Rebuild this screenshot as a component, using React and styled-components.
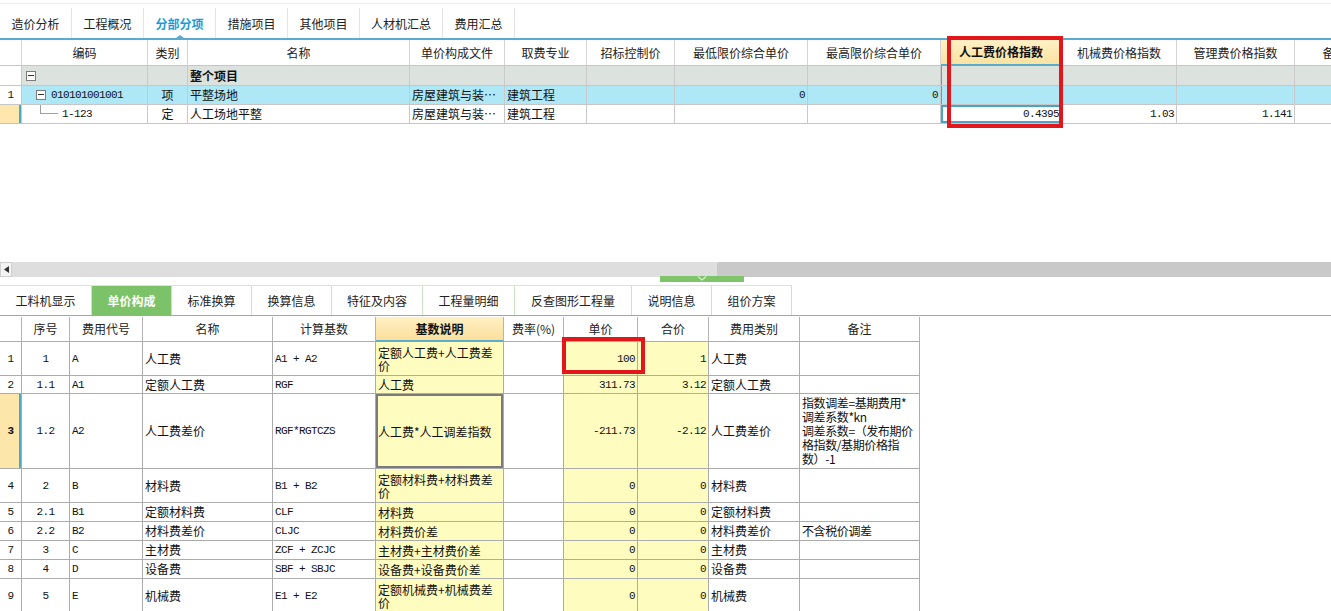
import React from 'react'
import styled, { createGlobalStyle, css } from 'styled-components'

const GlobalStyle = createGlobalStyle`
  html, body { margin: 0; padding: 0; background: #fff; }
  body {
    font-family: "Noto Sans CJK SC", "Noto Sans", sans-serif;
    font-size: 12px;
    color: #111;
    overflow: hidden;
  }
`

const topTabs = ['造价分析', '工程概况', '分部分项', '措施项目', '其他项目', '人材机汇总', '费用汇总']
const topTabWidths = [72, 72, 72, 72, 72, 83, 72]

const bottomTabs = ['工料机显示', '单价构成', '标准换算', '换算信息', '特征及内容', '工程量明细', '反查图形工程量', '说明信息', '组价方案']
const bottomTabWidths = [92, 80, 80, 80, 91, 92, 117, 80, 80]

const topCols = '22px 126px 40px 222px 95px 82px 88px 133px 133px 121px 115px 118px 80px'
const topHead = ['', '编码', '类别', '名称', '单价构成文件', '取费专业', '招标控制价', '最低限价综合单价', '最高限价综合单价', '人工费价格指数', '机械费价格指数', '管理费价格指数', '备注']

const botCols = '22px 48px 73px 130px 103px 128px 60px 74px 71px 91px 120px'
const botHead = ['', '序号', '费用代号', '名称', '计算基数', '基数说明', '费率(%)', '单价', '合价', '费用类别', '备注']

const botRows = [
  { h: 34, no: '1', seq: '1', code: 'A', name: '人工费', base: 'A1 + A2', desc: '定额人工费+人工费差价', price: '100', total: '1', type: '人工费' },
  { h: 18, no: '2', seq: '1.1', code: 'A1', name: '定额人工费', base: 'RGF', desc: '人工费', price: '311.73', total: '3.12', type: '定额人工费' },
  {
    h: 75, no: '3', seq: '1.2', code: 'A2', name: '人工费差价', base: 'RGF*RGTCZS', desc: '人工费*人工调差指数', price: '-211.73', total: '-2.12', type: '人工费差价', current: true,
    note: ['指数调差=基期费用*', '调差系数*kn', '调差系数=（发布期价', '格指数/基期价格指', '数）-1'],
  },
  { h: 34, no: '4', seq: '2', code: 'B', name: '材料费', base: 'B1 + B2', desc: '定额材料费+材料费差价', price: '0', total: '0', type: '材料费' },
  { h: 19, no: '5', seq: '2.1', code: 'B1', name: '定额材料费', base: 'CLF', desc: '材料费', price: '0', total: '0', type: '定额材料费' },
  { h: 19, no: '6', seq: '2.2', code: 'B2', name: '材料费差价', base: 'CLJC', desc: '材料费价差', price: '0', total: '0', type: '材料费差价', note: ['不含税价调差'] },
  { h: 19, no: '7', seq: '3', code: 'C', name: '主材费', base: 'ZCF + ZCJC', desc: '主材费+主材费价差', price: '0', total: '0', type: '主材费' },
  { h: 19, no: '8', seq: '4', code: 'D', name: '设备费', base: 'SBF + SBJC', desc: '设备费+设备费价差', price: '0', total: '0', type: '设备费' },
  { h: 34, no: '9', seq: '5', code: 'E', name: '机械费', base: 'E1 + E2', desc: '定额机械费+机械费差价', price: '0', total: '0', type: '机械费' },
]

function App() {
  return (
    <>
      <GlobalStyle />
      <Page>
        <TopBar>
          {topTabs.map((t, i) => (
            <TopTab key={t} $w={topTabWidths[i]} $active={i === 2}>{t}</TopTab>
          ))}
        </TopBar>

        <TopPanel>
          <Grid $cols={topCols}>
            <TopRow $h={26}>
              {topHead.map((t, i) => (
                <TopHeadCell key={i} $hl={i === 9}>{t}</TopHeadCell>
              ))}
            </TopRow>

            <TopRow $h={20} $bg="#dce3df">
              <TopCell $bg="#fff" />
              <TopCell><TreeBox $ml={2} /></TopCell>
              <TopCell />
              <TopCell $bold>整个项目</TopCell>
              <TopCell /><TopCell /><TopCell /><TopCell /><TopCell />
              <TopCell $cur /><TopCell /><TopCell /><TopCell />
            </TopRow>

            <TopRow $h={19} $bg="#aee7f6">
              <TopCell $bg="#fff" $align="center"><Mono>1</Mono></TopCell>
              <TopCell><TreeBox $ml={12} /><Mono style={{ marginLeft: 5 }}>010101001001</Mono></TopCell>
              <TopCell $align="center">项</TopCell>
              <TopCell>平整场地</TopCell>
              <TopCell><Clip>房屋建筑与装…</Clip></TopCell>
              <TopCell>建筑工程</TopCell>
              <TopCell />
              <TopCell $align="right"><Mono>0</Mono></TopCell>
              <TopCell $align="right"><Mono>0</Mono></TopCell>
              <TopCell $cur /><TopCell /><TopCell /><TopCell />
            </TopRow>

            <TopRow $h={19}>
              <TopCell $rowHead />
              <TopCell><Connector /><Mono style={{ marginLeft: 4 }}>1-123</Mono></TopCell>
              <TopCell $align="center">定</TopCell>
              <TopCell>人工场地平整</TopCell>
              <TopCell><Clip>房屋建筑与装…</Clip></TopCell>
              <TopCell>建筑工程</TopCell>
              <TopCell />
              <TopCell />
              <TopCell />
              <TopCell $align="right" $selected><Mono>0.4395</Mono></TopCell>
              <TopCell $align="right"><Mono>1.03</Mono></TopCell>
              <TopCell $align="right"><Mono>1.141</Mono></TopCell>
              <TopCell />
            </TopRow>
          </Grid>
        </TopPanel>

        <HScroll>
          <ScrollBtn>
            <svg width="5" height="7" viewBox="0 0 5 7"><polygon points="5,0 5,7 0,3.5" fill="#333" /></svg>
          </ScrollBtn>
          <ScrollThumb />
        </HScroll>

        <Splitter>
          <SplitHandle>
            <svg width="10" height="5" viewBox="0 0 10 5">
              <polyline points="1,0.5 5,4 9,0.5" fill="none" stroke="#d9eed2" strokeWidth="1.2" />
            </svg>
          </SplitHandle>
        </Splitter>

        <BottomBar>
          {bottomTabs.map((t, i) => (
            <BottomTab key={t} $w={bottomTabWidths[i]} $active={i === 1}>{t}</BottomTab>
          ))}
        </BottomBar>

        <BottomPanel>
          <Grid $cols={botCols}>
            <BotRow $h={25}>
              {botHead.map((t, i) => (
                <BotHeadCell key={i} $hl={i === 5}>{t}</BotHeadCell>
              ))}
            </BotRow>
            {botRows.map(r => (
              <BotRow key={r.no} $h={r.h}>
                <BotCell $align="center" $rowHead={r.current} $bold={r.current}><Mono>{r.no}</Mono></BotCell>
                <BotCell $align="center"><Mono>{r.seq}</Mono></BotCell>
                <BotCell><Mono>{r.code}</Mono></BotCell>
                <BotCell>{r.name}</BotCell>
                <BotCell><Mono>{r.base}</Mono></BotCell>
                <BotCell $bg="#fffcc0" $wrap $selected={r.current}>{r.desc}</BotCell>
                <BotCell />
                <BotCell $bg="#fffcc0" $align="right"><Mono>{r.price}</Mono></BotCell>
                <BotCell $bg="#fffcc0" $align="right"><Mono>{r.total}</Mono></BotCell>
                <BotCell>{r.type}</BotCell>
                <BotCell $wrap>
                  {r.note && <Note>{r.note.map((l, i) => <span key={i}>{l}</span>)}</Note>}
                </BotCell>
              </BotRow>
            ))}
          </Grid>
        </BottomPanel>

        <Mark $x={947} $y={36} $w={116} $h={92} />
        <Mark $x={562} $y={337} $w={83} $h={37} />
      </Page>
    </>
  )
}

export default App

const Page = styled.div`
  position: relative;
  width: 1331px;
  height: 611px;
  overflow: hidden;
  display: flex;
  flex-direction: column;
  background: #fff;
`

const TopBar = styled.div`
  display: flex;
  margin-top: 3px;
  padding-top: 4px;
  border-top: 1px solid #ececec;
  border-bottom: 2px solid #5aaad2;
  height: 30px;
`

const TopTab = styled.div`
  position: relative;
  box-sizing: border-box;
  width: ${p => p.$w}px;
  display: flex;
  align-items: center;
  justify-content: center;
  border-right: 1px solid #e4e4e4;
  font-size: 12px;
  color: ${p => (p.$active ? '#1d9ad6' : '#222')};
  font-weight: ${p => (p.$active ? 'bold' : 'normal')};
  ${p => p.$active && css`
    &::after {
      content: '';
      position: absolute;
      left: 50%;
      bottom: 0;
      margin-left: -4px;
      border-left: 4px solid transparent;
      border-right: 4px solid transparent;
      border-bottom: 3px solid #5aaad2;
    }
  `}
`

const TopPanel = styled.div`
  height: 222px;
  overflow: hidden;
`

const Grid = styled.div`
  display: grid;
  grid-template-columns: ${p => p.$cols};
  width: max-content;
`

const TopRow = styled.div`
  display: contents;
  & > div {
    height: ${p => p.$h}px;
    background: ${p => p.$bg || '#fff'};
  }
`

const cellBase = css`
  box-sizing: border-box;
  display: flex;
  align-items: center;
  justify-content: ${p => (p.$align === 'right' ? 'flex-end' : p.$align === 'center' ? 'center' : 'flex-start')};
  padding: 0 2px;
  overflow: hidden;
  white-space: nowrap;
  font-weight: ${p => (p.$bold ? 'bold' : 'normal')};
  line-height: 14px;
`

const TopHeadCell = styled.div`
  ${cellBase}
  justify-content: center;
  border-right: 1px solid #d4d4d4;
  border-bottom: 1px solid #c6c6c6;
  color: #222;
  ${p => p.$hl && css`
    && { background: linear-gradient(#fff1c6, #fbe2a0); }
    font-weight: bold;
    color: #111;
    border-bottom: 2px solid #5aaecb;
  `}
`

const TopCell = styled.div`
  ${cellBase}
  border-right: 1px solid #c9c9c9;
  border-bottom: 1px solid #c6c6c6;
  && { ${p => p.$bg && `background: ${p.$bg};`} }
  ${p => p.$cur && css`box-shadow: inset 1px 0 0 #4ea7c6;`}
  ${p => p.$rowHead && css`
    && { background: #fde7ad; }
    box-shadow: inset -2px 0 0 #4ea7c6;
  `}
  ${p => p.$selected && css`box-shadow: inset 0 0 0 2px #4aa4c8;`}
`

const Clip = styled.span`
  overflow: hidden;
  white-space: nowrap;
  min-width: 0;
`

const Mono = styled.span`
  font-family: "Liberation Mono", "DejaVu Sans Mono", monospace;
  font-size: 11px;
  letter-spacing: -0.6px;
`

const TreeBox = styled.span`
  position: relative;
  box-sizing: border-box;
  flex: none;
  width: 10px;
  height: 10px;
  margin-left: ${p => p.$ml}px;
  border: 1px solid #7c7c7c;
  background: #fff;
  &::after {
    content: '';
    position: absolute;
    left: 1px;
    right: 1px;
    top: 3px;
    height: 1px;
    background: #333;
  }
`

const Connector = styled.span`
  flex: none;
  align-self: flex-start;
  width: 17px;
  height: 8px;
  margin-left: 16px;
  border-left: 1px solid #a0a0a0;
  border-bottom: 1px solid #a0a0a0;
`

const HScroll = styled.div`
  display: flex;
  height: 15px;
  background: #dedede;
`

const ScrollBtn = styled.div`
  box-sizing: border-box;
  width: 12px;
  display: flex;
  align-items: center;
  justify-content: center;
  background: #f3f3f3;
  border: 1px solid #d0d0d0;
`

const ScrollThumb = styled.div`
  margin-left: auto;
  width: 614px;
  background: #c9c9c9;
  border-radius: 3px 0 0 3px;
`

const Splitter = styled.div`
  height: 8px;
  display: flex;
  align-items: flex-start;
`

const SplitHandle = styled.div`
  margin-left: 660px;
  margin-top: -1px;
  width: 84px;
  height: 6px;
  background: #7dc46a;
  display: flex;
  justify-content: center;
  align-items: flex-start;
`

const BottomBar = styled.div`
  display: flex;
  height: 30px;
  border-bottom: 1px solid #8fb87e;
  margin-bottom: 1px;
`

const BottomTab = styled.div`
  box-sizing: border-box;
  width: ${p => p.$w}px;
  display: flex;
  align-items: center;
  justify-content: center;
  border-top: 1px solid #d6e8cd;
  border-right: 1px solid #cde2c2;
  font-size: 12px;
  color: ${p => (p.$active ? '#fff' : '#222')};
  font-weight: ${p => (p.$active ? 'bold' : 'normal')};
  background: ${p => (p.$active ? '#7cc268' : '#fff')};
`

const BottomPanel = styled.div`
  flex: 1;
  overflow: hidden;
`

const BotRow = styled.div`
  display: contents;
  & > div {
    height: ${p => p.$h}px;
  }
`

const BotHeadCell = styled.div`
  ${cellBase}
  justify-content: center;
  border-right: 1px solid #b4b4b4;
  border-bottom: 1px solid #adadad;
  background: #fff;
  color: #222;
  ${p => p.$hl && css`
    background: linear-gradient(#fff0c4, #fbdf9c);
    font-weight: bold;
    color: #111;
    border-bottom: 2px solid #5aaecb;
  `}
`

const BotCell = styled.div`
  ${cellBase}
  border-right: 1px solid #acacac;
  border-bottom: 1px solid #acacac;
  background: ${p => p.$bg || '#fff'};
  ${p => p.$wrap && css`
    white-space: normal;
    line-height: 13px;
  `}
  ${p => p.$rowHead && css`
    background: #fde6aa;
    box-shadow: inset -2px 0 0 #4ea7c6;
  `}
  ${p => p.$selected && css`box-shadow: inset 0 0 0 2px #7b7b7b;`}
`

const Note = styled.div`
  display: flex;
  flex-direction: column;
  line-height: 14px;
  white-space: nowrap;
  letter-spacing: -0.4px;
`

const Mark = styled.div`
  position: absolute;
  left: ${p => p.$x}px;
  top: ${p => p.$y}px;
  width: ${p => p.$w}px;
  height: ${p => p.$h}px;
  box-sizing: border-box;
  border: 4px solid #e3161c;
  pointer-events: none;
`
